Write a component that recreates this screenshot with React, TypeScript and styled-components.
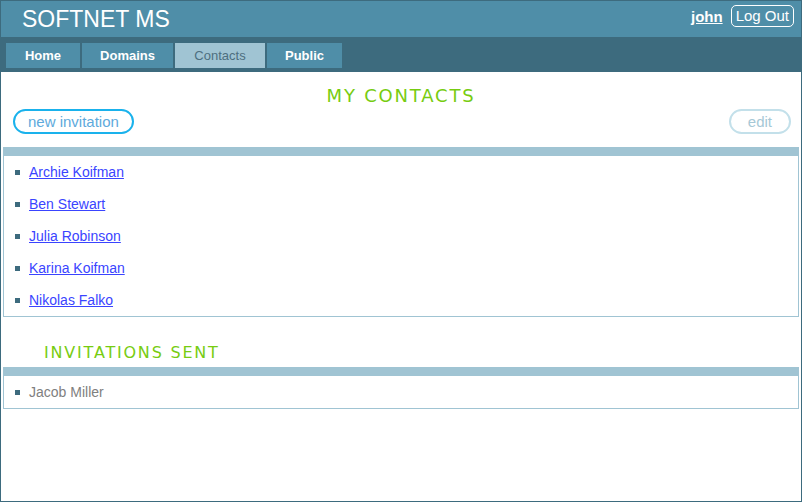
import React from "react";
import styled, { createGlobalStyle } from "styled-components";

const Global = createGlobalStyle`
  html, body { margin: 0; padding: 0; background: #fff; }
  body { font-family: "Liberation Sans", Arial, sans-serif; }
  * { box-sizing: border-box; }
`;

const Page = styled.div`
  width: 802px;
  height: 502px;
  border: 1px solid #3d6b7e;
  display: flex;
  flex-direction: column;
  background: #fff;
`;

const Header = styled.header`
  height: 36px;
  background: #4f8ea8;
  display: flex;
  align-items: center;
  justify-content: space-between;
  padding: 0 7px 0 21px;
`;

const Title = styled.h1`
  margin: 0;
  font-family: "Liberation Sans", Arial, sans-serif;
  font-weight: normal;
  font-size: 23px;
  color: #fff;
`;

const UserBox = styled.div`
  align-self: flex-start;
  margin-top: 4px;
  display: flex;
  align-items: center;
  gap: 8px;
`;

const UserLink = styled.a`
  color: #fff;
  font-weight: bold;
  font-size: 15px;
  text-decoration: underline;
`;

const LogOut = styled.button`
  height: 22px;
  padding: 0 4px;
  border: 1px solid #fff;
  border-radius: 5px;
  background: transparent;
  color: #fff;
  font-family: "Liberation Sans", Arial, sans-serif;
  font-size: 15px;
  line-height: 20px;
`;

const Nav = styled.nav`
  height: 35px;
  background: #3d6b7e;
  display: flex;
  gap: 2px;
  padding: 6px 0 4px 5px;
`;

const Tab = styled.a<{ $active?: boolean; $w: number }>`
  width: ${(p) => p.$w}px;
  height: 25px;
  display: flex;
  align-items: center;
  justify-content: center;
  font-size: 13px;
  font-weight: ${(p) => (p.$active ? "normal" : "bold")};
  color: ${(p) => (p.$active ? "#4d6f80" : "#fff")};
  background: ${(p) => (p.$active ? "#a0c4d3" : "#4f8ea8")};
`;

const Main = styled.main`
  padding: 0 2px;
  flex: 1;
`;

const Heading = styled.h2<{ $center?: boolean; $size: number }>`
  margin: 0;
  font-family: "DejaVu Sans", Verdana, sans-serif;
  font-weight: normal;
  font-size: ${(p) => p.$size}px;
  letter-spacing: 1.8px;
  color: #77cc11;
  text-align: ${(p) => (p.$center ? "center" : "left")};
`;

const MainHeading = styled(Heading)`
  line-height: 22px;
  padding-top: 13px;
`;

const SubHeading = styled(Heading)`
  line-height: 18px;
  margin: 27px 0 5px;
  padding-left: 41px;
`;

const Toolbar = styled.div`
  margin-top: 2px;
  display: flex;
  justify-content: space-between;
  padding: 0 8px 0 10px;
`;

const PillButton = styled.button<{ $muted?: boolean; $pad: number }>`
  height: 25px;
  padding: 0 ${(p) => p.$pad}px;
  border: 2px solid ${(p) => (p.$muted ? "#c3e0ea" : "#1ab2ec")};
  border-radius: 13px;
  background: #fff;
  color: ${(p) => (p.$muted ? "#a6c8d6" : "#5eaadc")};
  font-family: "Liberation Sans", Arial, sans-serif;
  font-size: 15px;
  line-height: 21px;
`;

const Box = styled.ul<{ $top: number }>`
  margin: ${(p) => p.$top}px 0 0;
  padding: 0;
  list-style: none;
  border: 1px solid #a0c4d3;
  border-top-width: 9px;
`;

const Item = styled.li`
  position: relative;
  height: 32px;
  line-height: 32px;
  padding-left: 25px;
  font-size: 14px;
  color: #808080;
  &::before {
    content: "";
    position: absolute;
    left: 11px;
    top: 14px;
    width: 5px;
    height: 5px;
    background: #3d6b7e;
  }
`;

const ContactLink = styled.a`
  color: #3a44ff;
  text-decoration: underline;
`;

const contacts = [
  "Archie Koifman",
  "Ben Stewart",
  "Julia Robinson",
  "Karina Koifman",
  "Nikolas Falko",
];

export default function App() {
  return (
    <>
      <Global />
      <Page>
        <Header>
          <Title>SOFTNET MS</Title>
          <UserBox>
            <UserLink href="#">john</UserLink>
            <LogOut>Log Out</LogOut>
          </UserBox>
        </Header>
        <Nav>
          <Tab $w={74}>Home</Tab>
          <Tab $w={91}>Domains</Tab>
          <Tab $w={90} $active>Contacts</Tab>
          <Tab $w={75}>Public</Tab>
        </Nav>
        <Main>
          <MainHeading $center $size={18}>MY CONTACTS</MainHeading>
          <Toolbar>
            <PillButton $pad={13}>new invitation</PillButton>
            <PillButton $muted $pad={17}>edit</PillButton>
          </Toolbar>
          <Box $top={13}>
            {contacts.map((c) => (
              <Item key={c}>
                <ContactLink href="#">{c}</ContactLink>
              </Item>
            ))}
          </Box>
          <SubHeading $size={16}>INVITATIONS SENT</SubHeading>
          <Box $top={0}>
            <Item>Jacob Miller</Item>
          </Box>
        </Main>
      </Page>
    </>
  );
}
